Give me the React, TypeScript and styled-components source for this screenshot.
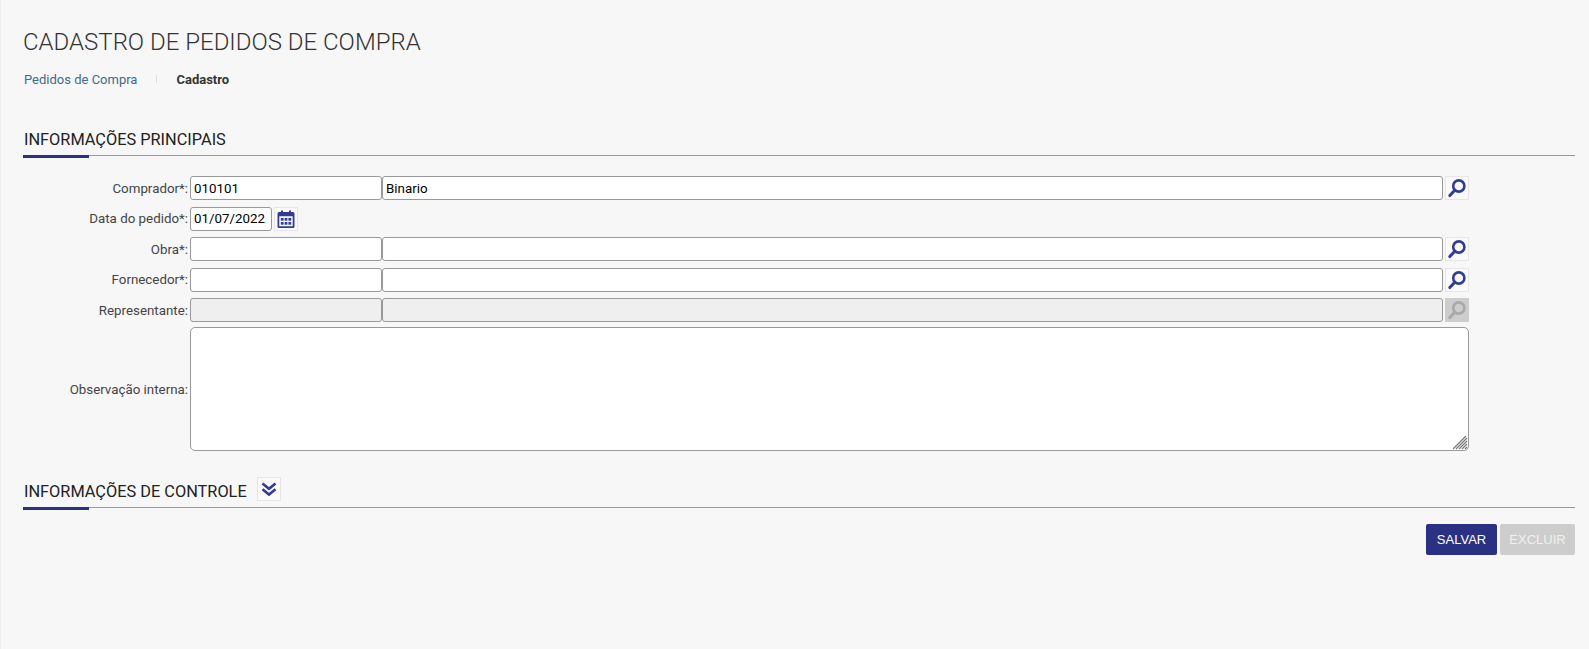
import React from "react";
import styled, { createGlobalStyle } from "styled-components";

const Global = createGlobalStyle`
  html, body { margin: 0; padding: 0; height: 100%; background: #f7f7f7; }
  body { font-family: Roboto, "Liberation Sans", sans-serif; overflow: hidden; }
  #root { height: 100%; }
`;

const Page = styled.div`
  box-sizing: border-box;
  height: 649px;
  padding: 0 14px 0 22px;
  border-left: 1px solid #efefef;
`;
const Title = styled.h1`
  margin: 0;
  padding: 27px 0 0 0;
  font-size: 24px;
  line-height: 30px;
  font-weight: 300;
  color: #333;
`;
const Crumbs = styled.nav`
  display: flex;
  align-items: center;
  height: 16px;
  margin-top: 14px;
  padding-left: 1px;
  font-size: 13px;
`;
const CrumbLink = styled.span`
  color: #3f6a8a;
`;
const CrumbSep = styled.span`
  width: 1px;
  height: 8px;
  margin: 0 19px;
  background: #ddd;
`;
const CrumbCurrent = styled.span`
  font-weight: 700;
  color: #333;
`;
const Section = styled.div<{ $top: number }>`
  display: flex;
  align-items: center;
  gap: 10px;
  box-sizing: border-box;
  height: 27px;
  margin-top: ${(p) => p.$top}px;
  padding: 0 0 5px 1px;
  border-bottom: 1px solid #999;
  position: relative;
  &::after {
    content: "";
    position: absolute;
    left: 0;
    bottom: -3px;
    width: 66px;
    height: 3px;
    background: #2a3182;
  }
`;
const SectionTitle = styled.h2`
  margin: 0;
  font-size: 16.33px;
  font-weight: 400;
  color: #222;
`;
const Form = styled.div`
  display: flex;
  flex-direction: column;
  margin-top: 20px;
  width: 1446px;
`;
const Row = styled.div<{ $mb?: number }>`
  display: flex;
  align-items: center;
  min-height: 24px;
  margin-bottom: ${(p) => p.$mb ?? 6.5}px;
`;
const Label = styled.label`
  width: 167px;
  flex: none;
  padding-right: 2px;
  box-sizing: border-box;
  text-align: right;
  font-size: 13.33px;
  color: #444;
  white-space: nowrap;
`;
const Input = styled.input<{ $w?: number }>`
  box-sizing: border-box;
  height: 24px;
  width: ${(p) => (p.$w ? `${p.$w}px` : "auto")};
  flex: ${(p) => (p.$w ? "none" : "1 1 0")};
  min-width: 0;
  padding: 0 3px;
  border: 1px solid #999;
  border-radius: 3px;
  background: #fff;
  font: 13.33px Roboto, sans-serif;
  color: #000;
  outline: none;
  &:disabled { background: #efefef; }
`;
const AreaWrap = styled.div`
  flex: 1;
  position: relative;
  display: flex;
  margin-top: -2px;
`;
const Area = styled.textarea`
  box-sizing: border-box;
  flex: 1;
  height: 124px;
  margin: 0;
  border: 1px solid #999;
  border-radius: 5px;
  background: #fff;
  outline: none;
  resize: none;
`;
const Grip = styled.svg`
  position: absolute;
  right: 1px;
  bottom: 1px;
`;
const IconBtn = styled.button<{ $off?: boolean }>`
  box-sizing: border-box;
  flex: none;
  width: 24px;
  height: 24px;
  margin-left: 2px;
  padding: 0;
  display: flex;
  align-items: center;
  justify-content: center;
  border: 1px solid ${(p) => (p.$off ? "#cdcdcd" : "#e6e6e6")};
  background: ${(p) => (p.$off ? "#cdcdcd" : "#fafafa")};
  color: ${(p) => (p.$off ? "#a9a9a9" : "#323c96")};
`;
const CollapseBtn = styled(IconBtn)`
  margin: -4px 0 0 0;
`;
const Actions = styled.div`
  display: flex;
  justify-content: flex-end;
  gap: 3px;
  margin-top: 16px;
`;
const Btn = styled.button<{ $off?: boolean }>`
  box-sizing: border-box;
  height: 31px;
  width: ${(p) => (p.$off ? 75 : 71)}px;
  padding: 0;
  border: 0;
  border-radius: 2px;
  background: ${(p) => (p.$off ? "#cdcdcd" : "#2a3182")};
  color: ${(p) => (p.$off ? "#f0f0f0" : "#fff")};
  font: 13px "Liberation Sans", Arial, sans-serif;
`;

const Search = () => (
  <svg width="20" height="20" viewBox="0 0 20 20" fill="none" stroke="currentColor">
    <circle cx="11.8" cy="8" r="5.6" strokeWidth="2.6" />
    <path d="M7.8 12.2 L2.8 17.6" strokeWidth="3" strokeLinecap="round" />
  </svg>
);
const Calendar = () => (
  <svg width="20" height="20" viewBox="0 0 20 20" fill="currentColor">
    <path fillRule="evenodd" d="M1.500 4.500A1.500 1.500 0 0 1 3 3H5V1.500h2V3h6V1.500h2V3h2a1.500 1.500 0 0 1 1.500 1.500v13A1.500 1.500 0 0 1 17 19H3a1.500 1.500 0 0 1-1.500-1.500zM3.300 7.300v9.900h13.400V7.300z" />
    <rect x="4.800" y="9" width="2.800" height="2.700" />
    <rect x="8.600" y="9" width="2.800" height="2.700" />
    <rect x="12.400" y="9" width="2.800" height="2.700" />
    <rect x="4.800" y="13" width="2.800" height="2.700" />
    <rect x="8.600" y="13" width="2.800" height="2.700" />
    <rect x="12.400" y="13" width="2.800" height="2.700" />
  </svg>
);
const Chevrons = () => (
  <svg width="18" height="18" viewBox="0 0 18 18" fill="none" stroke="currentColor" strokeWidth="2.6">
    <path d="M2.500 3.500 9 8.800 15.500 3.500" />
    <path d="M2.500 9.200 9 14.500 15.500 9.200" />
  </svg>
);

const LookupRow = ({ label, code, name, off }: { label: string; code?: string; name?: string; off?: boolean }) => (
  <Row>
    <Label>{label}:</Label>
    <Input $w={192} defaultValue={code} disabled={off} />
    <Input defaultValue={name} disabled={off} />
    <IconBtn $off={off}><Search /></IconBtn>
  </Row>
);

export default function App() {
  return (
    <Page>
      <Global />
      <Title>CADASTRO DE PEDIDOS DE COMPRA</Title>
      <Crumbs>
        <CrumbLink>Pedidos de Compra</CrumbLink>
        <CrumbSep />
        <CrumbCurrent>Cadastro</CrumbCurrent>
      </Crumbs>
      <Section $top={42}>
        <SectionTitle>INFORMAÇÕES PRINCIPAIS</SectionTitle>
      </Section>
      <Form>
        <LookupRow label="Comprador*" code="010101" name="Binario" />
        <Row>
          <Label>Data do pedido*:</Label>
          <Input $w={82} defaultValue="01/07/2022" />
          <IconBtn><Calendar /></IconBtn>
        </Row>
        <LookupRow label="Obra*" />
        <LookupRow label="Fornecedor*" />
        <LookupRow label="Representante" off />
        <Row $mb={0}>
          <Label>Observação interna:</Label>
          <AreaWrap>
            <Area />
            <Grip width="16" height="15" viewBox="0 0 16 15" stroke="#777" strokeWidth="1.2">
              <path d="M1 14 14 1M4 14 15 3M7 14 15 6M10 14 15 9M13 14 15 12" />
            </Grip>
          </AreaWrap>
        </Row>
      </Form>
      <Section $top={30}>
        <SectionTitle>INFORMAÇÕES DE CONTROLE</SectionTitle>
        <CollapseBtn><Chevrons /></CollapseBtn>
      </Section>
      <Actions>
        <Btn>SALVAR</Btn>
        <Btn $off>EXCLUIR</Btn>
      </Actions>
    </Page>
  );
}
